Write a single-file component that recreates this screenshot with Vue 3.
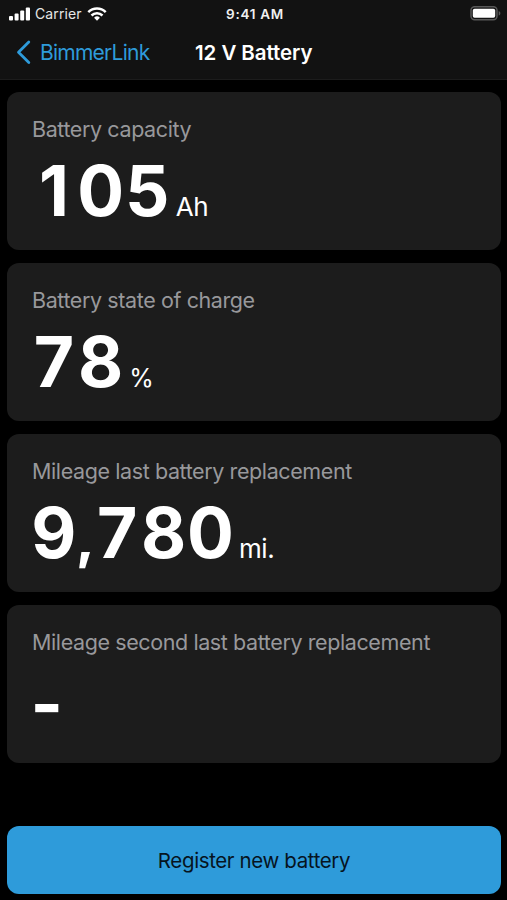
<script setup>
const cards = [
  { label: 'Battery capacity', value: '105', unit: 'Ah', kind: 'capacity' },
  { label: 'Battery state of charge', value: '78', unit: '%', kind: 'charge' },
  { label: 'Mileage last battery replacement', value: '9,780', unit: 'mi.', kind: 'last' },
  { label: 'Mileage second last battery replacement', value: '-', unit: '', kind: 'second' },
]

// Digits sit in equal-width cells so readings line up between cards.
const glyphClass = (ch) => (ch === ',' ? 'comma' : ch === '-' ? 'dash' : 'digit')
</script>

<template>
  <div class="screen">
    <header class="top">
      <div class="status">
        <div class="left">
          <svg class="signal" width="22" height="14" viewBox="0 0 22 14" fill="#fff">
            <rect x="0" y="9" width="4" height="4.4" rx="1" />
            <rect x="5.6" y="6.6" width="4" height="6.8" rx="1" />
            <rect x="11.2" y="3.6" width="4" height="9.8" rx="1" />
            <rect x="16.8" y="0.4" width="4.2" height="13" rx="1" />
          </svg>
          <span class="carrier">Carrier</span>
          <svg class="wifi" width="20" height="14" viewBox="0 0 20 14" fill="none" stroke="#fff" stroke-width="2.5">
            <path d="M1.3 5.2a12.3 12.3 0 0 1 17.4 0" />
            <path d="M4.5 8.5a7.8 7.8 0 0 1 11 0" />
            <path d="M10 13.8 7.1 10.8a4.1 4.1 0 0 1 5.8 0z" fill="#fff" stroke="none" />
          </svg>
        </div>
        <span class="time">9:41 AM</span>
        <svg class="battery" width="31" height="15" viewBox="0 0 31 15">
          <rect x="1" y=".7" width="26" height="13" rx="3.6" fill="none" stroke="#585858" stroke-width="1.5" />
          <rect x="2.8" y="2.7" width="22.4" height="9" rx="1.8" fill="#fff" />
          <path d="M28.7 4.9c2.2.8 2.2 3.8 0 4.6z" fill="#585858" />
        </svg>
      </div>
      <nav class="nav">
        <div class="back">
          <svg width="16" height="26" viewBox="0 0 16 26" fill="none" stroke="#2e9bda" stroke-width="2.8" stroke-linecap="round" stroke-linejoin="round">
            <path d="M12.8 3 2.5 13.2 12.8 23.4" />
          </svg>
          <span class="back-text">BimmerLink</span>
        </div>
        <h1 class="title">12 V Battery</h1>
      </nav>
    </header>
    <main class="cards">
      <section v-for="c in cards" :key="c.kind" class="card" :class="c.kind">
        <div class="label"><span>{{ c.label }}</span></div>
        <div class="reading">
          <span class="value"><span v-for="(ch, i) in c.value" :key="i" :class="glyphClass(ch)">{{ ch }}</span></span>
          <span v-if="c.unit" class="unit">{{ c.unit }}</span>
        </div>
      </section>
    </main>
    <button class="register"><span>Register new battery</span></button>
  </div>
</template>

<style>
body { background: #000; }
</style>

<style scoped>
.screen { width: 507px; height: 900px; background: #000; color: #fff; font-family: Inter, sans-serif; display: flex; flex-direction: column; overflow: hidden; }
.top { height: 80px; box-sizing: border-box; background: #121212; border-bottom: 1px solid #1c1c1c; flex: none; }
.status { height: 27px; display: grid; grid-template-columns: 1fr auto 1fr; align-items: center; padding: 0 6px 0 9px; }
.left { display: flex; align-items: center; }
.carrier { font-size: 14px; margin-left: 4px; letter-spacing: 0.1px; color: #e6e6e6; }
.wifi { margin-left: 5px; }
.time { font-size: 13.5px; font-weight: 600; letter-spacing: 0.7px; color: #f0f0f0; }
.battery { justify-self: end; }
.nav { height: 50px; display: grid; grid-template-columns: 195px auto 1fr; align-items: center; }
.back { display: flex; align-items: center; padding-left: 16px; color: #2e9bda; }
.back-text { font-size: 21px; margin-left: 8px; letter-spacing: -0.75px; }
.title { margin: 0; font-size: 20.5px; font-weight: 600; letter-spacing: -0.07px; }
.cards { padding: 11.5px 6px 0 7px; display: flex; flex-direction: column; gap: 12.5px; }
.card { height: 158.5px; box-sizing: border-box; background: #1c1c1c; border-radius: 12px; padding: 23.5px 25px 0; }
.label { height: 28px; line-height: 28px; font-size: 21.5px; color: #98989b; letter-spacing: -0.4px; white-space: nowrap; }
.reading { display: flex; align-items: baseline; height: 84px; line-height: 96px; }
.value { display: flex; align-items: baseline; margin-left: -1.4px; font-size: 69.5px; font-weight: 700; }
.digit { width: 46.6px; text-align: center; }
.comma { width: 16.6px; display: flex; justify-content: center; font-size: 52px; font-weight: 800; }
.unit { font-size: 26px; margin-left: 5.4px; letter-spacing: -0.4px; }
.charge .unit { font-size: 25px; }
.register { margin: 62.5px 6px 0 7px; height: 68.5px; border: 0; border-radius: 12px; background: #2e9bda; color: #06141f; font: 400 20.5px Inter, sans-serif; letter-spacing: -0.38px; padding: 1px 0 0; }
</style>
